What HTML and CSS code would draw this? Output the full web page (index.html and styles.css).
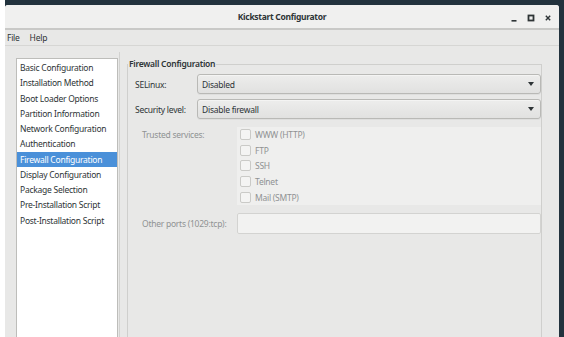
FILE: index.html
```html
<!DOCTYPE html>
<html lang="en">
<head>
    <meta charset="UTF-8">
    <title>Kickstart Configurator</title>
    <link rel="stylesheet" href="styles.css">
</head>
<body>
    <div class="desktop">
        <div class="window">
            <div class="titlebar">
                <span class="title">Kickstart Configurator</span>
                <div class="win-buttons">
                    <span class="win-btn">
                        <svg width="8" height="8" viewBox="0 0 8 8"><rect x="1.5" y="6" width="5" height="1.6" fill="#2e3436"/></svg>
                    </span>
                    <span class="win-btn">
                        <svg width="8" height="8" viewBox="0 0 8 8"><rect x="1.5" y="1.5" width="5" height="5" fill="none" stroke="#2e3436" stroke-width="1.8"/></svg>
                    </span>
                    <span class="win-btn">
                        <svg width="8" height="8" viewBox="0 0 8 8"><path d="M1.8 1.8 L6.2 6.2 M6.2 1.8 L1.8 6.2" stroke="#2e3436" stroke-width="1.4"/></svg>
                    </span>
                </div>
            </div>

            <div class="menubar">
                <span class="menu-item">File</span>
                <span class="menu-item">Help</span>
            </div>

            <div class="content">
                <ul class="section-list">
                    <li>Basic Configuration</li>
                    <li>Installation Method</li>
                    <li>Boot Loader Options</li>
                    <li>Partition Information</li>
                    <li>Network Configuration</li>
                    <li>Authentication</li>
                    <li class="selected">Firewall Configuration</li>
                    <li>Display Configuration</li>
                    <li>Package Selection</li>
                    <li>Pre-Installation Script</li>
                    <li>Post-Installation Script</li>
                </ul>

                <div class="pane-handle"></div>

                <fieldset class="frame">
                    <legend>Firewall Configuration</legend>
                    <div class="frame-body">
                        <div class="field-row">
                            <span class="field-label">SELinux:</span>
                            <div class="combo">
                                <span>Disabled</span>
                                <span class="combo-arrow"></span>
                            </div>
                        </div>
                        <div class="field-row">
                            <span class="field-label">Security level:</span>
                            <div class="combo">
                                <span>Disable firewall</span>
                                <span class="combo-arrow"></span>
                            </div>
                        </div>

                        <div class="disabled-block">
                            <div class="services-row">
                                <span class="muted-label">Trusted services:</span>
                                <div class="services">
                                    <label class="check"><span class="box"></span>WWW (HTTP)</label>
                                    <label class="check"><span class="box"></span>FTP</label>
                                    <label class="check"><span class="box"></span>SSH</label>
                                    <label class="check"><span class="box"></span>Telnet</label>
                                    <label class="check"><span class="box"></span>Mail (SMTP)</label>
                                </div>
                            </div>
                            <div class="ports-row">
                                <span class="muted-label">Other ports (1029:tcp):</span>
                                <div class="entry"></div>
                            </div>
                        </div>
                    </div>
                </fieldset>
            </div>
        </div>
    </div>
</body>
</html>
```

FILE: styles.css
```css
body {
    margin: 0;
    background-color: #FFFFFF;
    font-family: 'Noto Sans', 'Open Sans', sans-serif;
    font-size: 8.5px;
    letter-spacing: -0.25px;
    color: #2E3436;
    overflow: hidden;
}

.desktop {
    margin-left: 5px;
    height: 337px;
    background-color: #22323D;
    padding: 5px 5px 0 0;
    box-sizing: border-box;
    display: flex;
}

.window {
    flex: 1;
    display: flex;
    flex-direction: column;
    background-color: #E8E8E7;
    border-radius: 3px 3px 0 0;
    overflow: hidden;
}

/* Title bar */
.titlebar {
    height: 23px;
    background-color: #F0F0EF;
    border-bottom: 2px solid #C9C9C7;
    display: flex;
    align-items: center;
    justify-content: center;
    position: relative;
}

.title {
    font-weight: bold;
    font-size: 8.5px;
    letter-spacing: -0.3px;
}

.win-buttons {
    position: absolute;
    right: 7px;
    top: 1px;
    height: 100%;
    display: flex;
    align-items: center;
    gap: 9px;
}

.win-btn {
    width: 8px;
    height: 8px;
    display: flex;
}

/* Menu bar */
.menubar {
    height: 15px;
    border-bottom: 1px solid #D6D6D4;
    display: flex;
    align-items: center;
    gap: 10px;
    padding-left: 2px;
}

/* Main content */
.content {
    flex: 1;
    display: flex;
    align-items: stretch;
    padding: 6px 0 0 11px;
    min-height: 0;
}

.section-list {
    list-style: none;
    margin: 6px 0 0 0;
    padding: 1px 0 0 0;
    width: 100px;
    background-color: #FFFFFF;
    border: 1px solid #BDBDBA;
    border-bottom: none;
}

.section-list li {
    height: 15.25px;
    line-height: 15.25px;
    padding-left: 3px;
    white-space: nowrap;
}

.section-list li.selected {
    background-color: #4A90D9;
    color: #FFFFFF;
}

.pane-handle {
    width: 1px;
    margin-left: 1px;
    background-color: #D2D2D0;
}

.frame {
    flex: 1;
    margin: 6px 17px 0 7px;
    padding: 0;
    border: 1px solid #CFCFCD;
    border-bottom: none;
    min-width: 0;
}

.frame legend {
    font-weight: 600;
    padding: 0 1px;
    margin-left: 0;
    line-height: 12px;
}

.frame-body {
    padding: 4px 0 0 7px;
    display: flex;
    flex-direction: column;
    gap: 5px;
}

.field-row {
    display: grid;
    grid-template-columns: 62px 1fr;
    align-items: center;
}

.combo {
    height: 20px;
    box-sizing: border-box;
    border: 1px solid #B9B9B6;
    border-radius: 3px;
    background: linear-gradient(#EDEDEC, #E1E1E0);
    box-shadow: inset 0 1px #F4F4F3, 0 1px rgba(0, 0, 0, 0.04);
    display: flex;
    align-items: center;
    justify-content: space-between;
    padding: 0 6px 0 4px;
}

.combo-arrow {
    width: 0;
    height: 0;
    border-left: 3.5px solid transparent;
    border-right: 3.5px solid transparent;
    border-top: 4px solid #2E3436;
}

/* Insensitive part */
.disabled-block {
    margin-top: 3px;
    padding-left: 7px;
    display: flex;
    flex-direction: column;
    gap: 8px;
    color: #8F9293;
}

.services-row,
.ports-row {
    display: grid;
    grid-template-columns: 95px 1fr;
}

.services-row .muted-label {
    line-height: 15.6px;
}

.ports-row {
    align-items: center;
}

.services {
    background-color: #EFEFEE;
    display: flex;
    flex-direction: column;
}

.check {
    height: 15.6px;
    display: flex;
    align-items: center;
    gap: 4px;
    padding-left: 3px;
}

.check .box {
    width: 9px;
    height: 9px;
    border: 1px solid #CACAC7;
    border-radius: 2px;
    background-color: #F4F4F3;
}

.entry {
    height: 21px;
    box-sizing: border-box;
    border: 1px solid #D3D3D1;
    border-radius: 2px;
    background-color: #F2F2F1;
}
```
